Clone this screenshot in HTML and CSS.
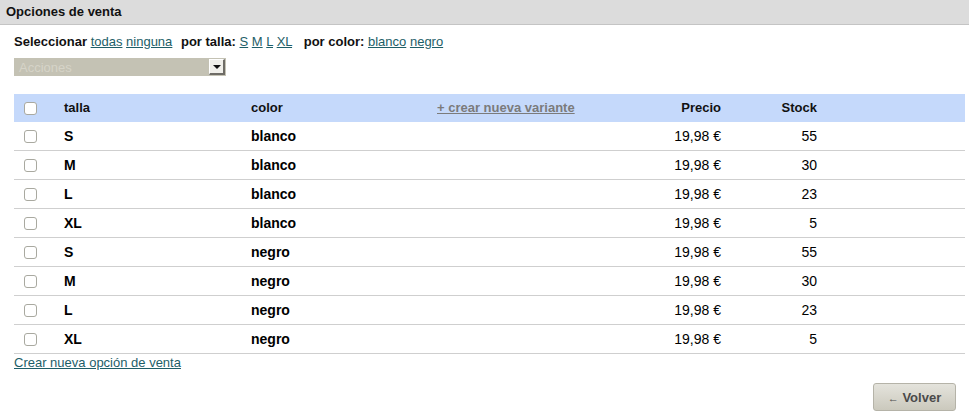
FILE: index.html
```html
<!DOCTYPE html>
<html lang="es">
<head>
<meta charset="utf-8">
<title>Opciones de venta</title>
<link rel="stylesheet" href="styles.css">
</head>
<body>
<div class="titlebar">Opciones de venta</div>
<div class="content">
  <div class="filters">
    <b>Seleccionar</b> <a href="#">todas</a> <a href="#">ninguna</a>
    <b class="sp">por talla:</b> <a href="#">S</a> <a href="#">M</a> <a href="#">L</a> <a href="#">XL</a>
    <b class="sp sp2">por color:</b> <a href="#">blanco</a> <a href="#">negro</a>
  </div>
  <div class="select">
    <span class="select-text">Acciones</span>
    <span class="select-btn"><span class="tri"></span></span>
  </div>
  <table class="grid">
    <colgroup>
      <col class="c-chk"><col class="c-talla"><col class="c-color"><col class="c-var"><col class="c-precio"><col class="c-stock"><col>
    </colgroup>
    <thead>
      <tr>
        <th><span class="chk"></span></th>
        <th>talla</th>
        <th>color</th>
        <th><a class="newvar" href="#">+ crear nueva variante</a></th>
        <th class="r">Precio</th>
        <th class="r">Stock</th>
        <th></th>
      </tr>
    </thead>
    <tbody>
      <tr><td><span class="chk"></span></td><td class="b">S</td><td class="b">blanco</td><td></td><td class="r">19,98 €</td><td class="r">55</td><td></td></tr>
      <tr><td><span class="chk"></span></td><td class="b">M</td><td class="b">blanco</td><td></td><td class="r">19,98 €</td><td class="r">30</td><td></td></tr>
      <tr><td><span class="chk"></span></td><td class="b">L</td><td class="b">blanco</td><td></td><td class="r">19,98 €</td><td class="r">23</td><td></td></tr>
      <tr><td><span class="chk"></span></td><td class="b">XL</td><td class="b">blanco</td><td></td><td class="r">19,98 €</td><td class="r">5</td><td></td></tr>
      <tr><td><span class="chk"></span></td><td class="b">S</td><td class="b">negro</td><td></td><td class="r">19,98 €</td><td class="r">55</td><td></td></tr>
      <tr><td><span class="chk"></span></td><td class="b">M</td><td class="b">negro</td><td></td><td class="r">19,98 €</td><td class="r">30</td><td></td></tr>
      <tr><td><span class="chk"></span></td><td class="b">L</td><td class="b">negro</td><td></td><td class="r">19,98 €</td><td class="r">23</td><td></td></tr>
      <tr><td><span class="chk"></span></td><td class="b">XL</td><td class="b">negro</td><td></td><td class="r">19,98 €</td><td class="r">5</td><td></td></tr>
    </tbody>
  </table>
  <a class="newopt" href="#">Crear nueva opción de venta</a>
  <div class="actions">
    <button class="btn" type="button"><span class="arr">←</span> Volver</button>
  </div>
</div>
</body>
</html>
```

FILE: styles.css
```css
html, body {
  margin: 0;
  padding: 0;
  background: #fff;
}
body {
  font-family: "Liberation Sans", Arial, sans-serif;
  font-size: 13px;
  color: #000;
}
a {
  color: #1d5e68;
  text-decoration: underline;
}
.titlebar {
  height: 24px;
  line-height: 24px;
  background: #dcdcdc;
  border-bottom: 1px solid #c4c4c4;
  font-weight: bold;
  padding-left: 6px;
  color: #111;
}
.content {
  padding: 8px 4px 0 14px;
}
.filters {
  line-height: 18px;
  height: 18px;
}
.filters b {
  color: #111;
}
.filters .sp {
  margin-left: 5px;
}
.filters .sp2 {
  margin-left: 8px;
}
.select {
  margin-top: 7px;
  width: 212px;
  height: 18px;
  background: #c4c2b4;
  display: flex;
  align-items: center;
  justify-content: space-between;
  box-sizing: border-box;
}
.select-text {
  color: #d6d4c8;
  padding-left: 5px;
  font-size: 13px;
}
.select-btn {
  width: 16px;
  height: 16px;
  margin-right: 1px;
  box-sizing: border-box;
  background: #f0efea;
  border-top: 1px solid #fff;
  border-left: 1px solid #fff;
  border-right: 2px solid #6e6c66;
  border-bottom: 2px solid #6e6c66;
  display: flex;
  align-items: center;
  justify-content: center;
}
.tri {
  width: 0;
  height: 0;
  border-left: 4px solid transparent;
  border-right: 4px solid transparent;
  border-top: 4px solid #111;
}
.grid {
  margin-top: 18px;
  width: 951px;
  border-collapse: collapse;
  table-layout: fixed;
}
.c-chk { width: 44px; }
.c-talla { width: 187px; }
.c-color { width: 186px; }
.c-var { width: 196px; }
.c-precio { width: 100px; }
.c-stock { width: 96px; }
.grid th, .grid td {
  padding: 0 6px;
  text-align: left;
  white-space: nowrap;
}
.grid th {
  height: 26px;
  padding-bottom: 2px;
  background: #c5d9fb;
  font-weight: bold;
  color: #111;
}
.grid td {
  height: 28px;
  border-bottom: 1px solid #cfcfcf;
  font-size: 14px;
}
.grid .r { text-align: right; }
.grid .b { font-weight: bold; }
.grid th:first-child, .grid td:first-child {
  padding-left: 10px;
}
.chk {
  display: block;
  width: 11px;
  height: 11px;
  border: 1px solid #a9a9a0;
  border-radius: 3px;
  background: #fff;
}
.grid th:first-child .chk {
  margin-top: 2px;
}
.newvar {
  color: #7b7b7b;
  font-weight: bold;
}
.newopt {
  display: inline-block;
  margin-top: 1px;
  line-height: 16px;
}
.actions {
  display: flex;
  justify-content: flex-end;
  padding-right: 9px;
  margin-top: 12px;
}
.btn {
  width: 83px;
  height: 28px;
  border: 1px solid #b5b3a8;
  border-radius: 3px;
  background: linear-gradient(#e4e3dc, #cbc9bd);
  font-family: "Liberation Sans", Arial, sans-serif;
  font-size: 13px;
  font-weight: bold;
  color: #4a4a4a;
  padding: 0;
}
.btn .arr {
  font-weight: normal;
  font-size: 11px;
}
```
